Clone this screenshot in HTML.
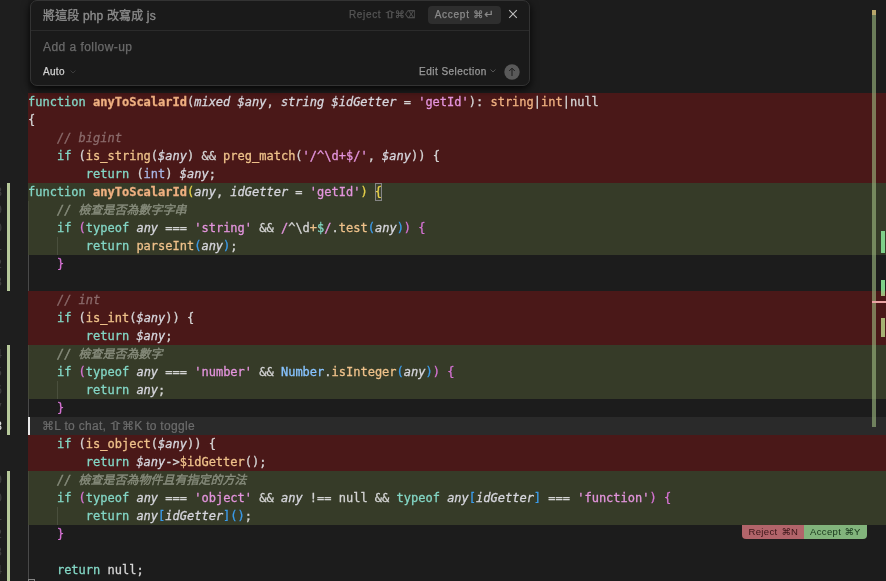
<!DOCTYPE html>
<html lang="zh-Hant">
<head>
<meta charset="utf-8">
<title>diff</title>
<style>
html,body{margin:0;padding:0;}
body{width:886px;height:581px;overflow:hidden;background:#1c1c1c;position:relative;font-family:"Liberation Sans","Noto Sans CJK TC",sans-serif;}
#gutter,#code,#panel,#btns{will-change:transform;}
#gutter{position:absolute;left:0;top:0;width:28px;height:581px;background:#1e1e1e;}
.gbar{position:absolute;left:7px;width:3px;background:#b7c99b;}
.ln{position:absolute;left:-12.3px;width:14.45px;height:18px;font:12px/18px "DejaVu Sans Mono","Liberation Mono",monospace;text-align:right;white-space:pre;}
#code{position:absolute;left:28px;top:93px;width:858px;}
.l{height:18px;line-height:18px;white-space:pre;font-family:"DejaVu Sans Mono","Liberation Mono","Noto Sans CJK TC",monospace;font-size:12px;letter-spacing:0;color:#d4d4d4;padding-left:0px;position:relative;font-variant-ligatures:none;-webkit-text-stroke:0.3px;}
.r{background:#4a1818;}
.g{background:#363b28;}
.cur{background:#2a2a2a;}
.k{color:#83d6c5;}
.f{color:#efb080;}
.fn{color:#eec18a;}
.v{color:#d6d6dd;font-style:italic;}
.s{color:#e394dc;}
.c{color:#6d6d6d;font-style:italic;}
.cr{color:#8a6a6a;font-style:italic;}
.cg{color:#878c7c;font-style:italic;-webkit-text-stroke:.4px;}
.t{color:#efb080;}
.y{color:#e6d04a;}
.bx{display:inline-block;height:18px;box-shadow:inset 0 0 0 1px #858585;background:rgba(255,255,255,.04);}
.ct{color:#a9b7e4;}
.p{color:#d673d4;}
.b{color:#3b9ceb;}
.cl{color:#87c3ff;}
.w{color:#d6d6dd;}
.ig{position:absolute;left:0px;top:0;width:1px;height:18px;background:rgba(255,255,255,.10);}
.hint{font-family:"Liberation Sans",sans-serif;font-size:12px;color:#6c6c6c;letter-spacing:.3px;-webkit-text-stroke:0.2px;}
#panel{position:absolute;left:30px;top:0;width:498px;height:84px;border:1px solid #333;border-radius:7px;background:#1a1a1a;box-shadow:0 3px 9px rgba(0,0,0,.85);}
#panel .div{position:absolute;left:0;right:0;top:29px;height:1px;background:#2b2b2b;}
#panel .tx{position:absolute;white-space:nowrap;-webkit-text-stroke:0.25px;}
.sym{font-family:"DejaVu Sans",sans-serif;}
.sh{font-family:"DejaVu Sans",sans-serif;display:inline-block;width:1em;text-align:center;transform:scaleX(1.7);letter-spacing:0;}
#vline{position:absolute;left:872px;top:10px;width:4px;height:417px;background:rgba(160,188,130,.6);}
#vtop{position:absolute;left:872px;top:10px;width:4px;height:5px;background:#b8a66a;}
.om{position:absolute;left:881px;width:4px;}
#pinkline{position:absolute;left:872px;top:301px;width:14px;height:2px;background:#e9a3a3;}
#btns{position:absolute;left:742px;top:525px;height:14px;width:125px;font-size:10px;line-height:14px;white-space:nowrap;}
#btns span.rj{position:absolute;left:0;top:0;width:62px;height:14px;background:#b2646a;color:#3a1518;border-radius:0 0 0 4px;text-align:center;}
#btns span.ac{position:absolute;left:62px;top:0;width:63px;height:14px;background:#82b47c;color:#17351a;border-radius:0 0 4px 0;text-align:center;}
#btns .bt{position:absolute;top:0;font-size:9.5px;line-height:14px;letter-spacing:.35px;}
.bk{display:inline-block;transform:scaleX(.72);transform-origin:0 50%;}
.l:not(.g)>.ig{background:rgba(255,255,255,.2);}
.g>.ig:first-child{background:rgba(255,255,255,.07);}
</style>
</head>
<body>
<div id="gutter">
<div class="ln" style="top:183px;color:#404040">38</div>
<div class="ln" style="top:201px;color:#404040">39</div>
<div class="ln" style="top:219px;color:#404040">40</div>
<div class="ln" style="top:237px;color:#404040">41</div>
<div class="ln" style="top:255px;color:#404040">42</div>
<div class="ln" style="top:273px;color:#404040">43</div>
<div class="ln" style="top:345px;color:#404040">44</div>
<div class="ln" style="top:363px;color:#404040">45</div>
<div class="ln" style="top:381px;color:#404040">46</div>
<div class="ln" style="top:399px;color:#404040">47</div>
<div class="ln" style="top:417px;color:#e0e0e0">48</div>
<div class="ln" style="top:471px;color:#404040">49</div>
<div class="ln" style="top:489px;color:#404040">50</div>
<div class="ln" style="top:507px;color:#404040">51</div>
<div class="ln" style="top:525px;color:#404040">52</div>
<div class="ln" style="top:543px;color:#404040">53</div>
<div class="ln" style="top:561px;color:#404040">54</div>
<div class="ln" style="top:579px;color:#404040">55</div>
<div class="gbar" style="top:183px;height:108px"></div>
<div class="gbar" style="top:345px;height:90px"></div>
<div class="gbar" style="top:471px;height:110px"></div>
</div>
<div id="code">
<div class="l r"><span class="k">function</span> <span class="f"><b>anyToScalarId</b></span>(<span class="v">mixed $any</span>, <span class="v">string $idGetter</span> = <span class="s">'getId'</span>): <span class="t">string</span>|<span class="t">int</span>|null</div>
<div class="l r">{</div>
<div class="l r">    <span class="cr">// bigint</span></div>
<div class="l r">    <span class="k">if</span> (<span class="fn">is_string</span>(<span class="v">$any</span>) &amp;&amp; <span class="fn">preg_match</span>(<span class="s">'/^\d+$/'</span>, <span class="v">$any</span>)) {</div>
<div class="l r">        <span class="k">return</span> (<span class="ct">int</span>) <span class="v">$any</span>;</div>
<div class="l g"><span class="k">function</span> <span class="f"><b>anyToScalarId</b></span><span class="y">(</span><span class="v">any</span>, <span class="v">idGetter</span> = <span class="s">'getId'</span><span class="y">)</span> <span class="y bx">{</span></div>
<div class="l g"><i class="ig"></i>    <span class="cg">// 檢查是否為數字字串</span></div>
<div class="l g"><i class="ig"></i>    <span class="k">if</span> <span class="p">(</span><span class="k">typeof</span> <span class="v">any</span> === <span class="s">'string'</span> &amp;&amp; <span class="s">/</span>^\d<span class="fn">+</span><span class="k">$</span><span class="s">/</span>.<span class="fn">test</span><span class="b">(</span><span class="v">any</span><span class="b">)</span><span class="p">)</span> <span class="p">{</span></div>
<div class="l g"><i class="ig"></i><i class="ig" style="left:29px"></i>        <span class="k">return</span> <span class="fn">parseInt</span><span class="b">(</span><span class="v">any</span><span class="b">)</span>;</div>
<div class="l"><i class="ig"></i>    <span class="p">}</span></div>
<div class="l"><i class="ig"></i></div>
<div class="l r">    <span class="cr">// int</span></div>
<div class="l r">    <span class="k">if</span> (<span class="fn">is_int</span>(<span class="v">$any</span>)) {</div>
<div class="l r">        <span class="k">return</span> <span class="v">$any</span>;</div>
<div class="l g"><i class="ig"></i>    <span class="cg">// 檢查是否為數字</span></div>
<div class="l g"><i class="ig"></i>    <span class="k">if</span> <span class="p">(</span><span class="k">typeof</span> <span class="v">any</span> === <span class="s">'number'</span> &amp;&amp; <span class="cl">Number</span>.<span class="fn">isInteger</span><span class="b">(</span><span class="v">any</span><span class="b">)</span><span class="p">)</span> <span class="p">{</span></div>
<div class="l g"><i class="ig"></i><i class="ig" style="left:29px"></i>        <span class="k">return</span> <span class="v">any</span>;</div>
<div class="l"><i class="ig"></i>    <span class="p">}</span></div>
<div class="l cur"><i style="position:absolute;left:0;top:0;width:2px;height:18px;background:#e8e8e8"></i><span class="hint" style="position:absolute;left:14px"><span class="sym">⌘</span>L to chat, <span class="sh">⇧</span><span class="sym">⌘</span>K to toggle</span></div>
<div class="l r">    <span class="k">if</span> (<span class="fn">is_object</span>(<span class="v">$any</span>)) {</div>
<div class="l r">        <span class="k">return</span> <span class="v">$any</span>-&gt;<span class="fn">$idGetter</span>();</div>
<div class="l g"><i class="ig"></i>    <span class="cg">// 檢查是否為物件且有指定的方法</span></div>
<div class="l g"><i class="ig"></i>    <span class="k">if</span> <span class="p">(</span><span class="k">typeof</span> <span class="v">any</span> === <span class="s">'object'</span> &amp;&amp; <span class="v">any</span> !== null &amp;&amp; <span class="k">typeof</span> <span class="v">any</span><span class="b">[</span><span class="v">idGetter</span><span class="b">]</span> === <span class="s">'function'</span><span class="p">)</span> <span class="p">{</span></div>
<div class="l g"><i class="ig"></i><i class="ig" style="left:29px"></i>        <span class="k">return</span> <span class="v">any</span><span class="b">[</span><span class="v">idGetter</span><span class="b">]()</span>;</div>
<div class="l"><i class="ig"></i>    <span class="p">}</span></div>
<div class="l"><i class="ig"></i></div>
<div class="l"><i class="ig"></i>    <span class="k">return</span> null;</div>
<div class="l"><span class="y bx">}</span></div>
</div>
<div id="vline"></div>
<div id="vtop"></div>
<div class="om" style="top:231px;height:22px;background:#7fd08a"></div>
<div class="om" style="top:280px;height:16px;background:linear-gradient(#7fd08a 0,#7fd08a 55%,#a9b579 100%)"></div>
<div id="pinkline"></div>
<div class="om" style="top:318px;height:19px;background:#a7b274"></div>
<div id="btns"><span class="rj"></span><span class="ac"></span><span class="bt" style="left:6.5px;color:#3a1518">Reject</span><span class="bt sym" style="left:39.5px;color:#3a1518;letter-spacing:0">⌘</span><span class="bt" style="left:49px;color:#3a1518">N</span><span class="bt" style="left:68px;color:#17351a">Accept</span><span class="bt sym" style="left:102.5px;color:#17351a;letter-spacing:0">⌘</span><span class="bt" style="left:112px;color:#17351a">Y</span></div>
<div id="panel">
<div class="div"></div>
<div class="tx" style="left:12px;top:5.7px;font-size:12px;line-height:18px;letter-spacing:.15px;color:#8c8c8c;-webkit-text-stroke:.35px">將這段 php 改寫成 js</div>
<div class="tx" style="left:12px;top:37px;font-size:12px;line-height:18px;letter-spacing:.45px;color:#6a6a6a">Add a follow-up</div>
<div class="tx" style="left:12px;top:62px;font-size:10px;line-height:18px;letter-spacing:.3px;color:#d0d0d0">Auto</div>
<svg class="tx" style="left:38px;top:67.5px" width="8" height="6" viewBox="0 0 8 6"><path d="M1.5 1.5 L4 4 L6.5 1.5" fill="none" stroke="#3c3c3c" stroke-width="1"/></svg>
<div class="tx" style="left:318px;top:5px;font-size:10px;line-height:18px;letter-spacing:.65px;color:#555">Reject <span class="sh">⇧</span><span class="sym">⌘</span><span class="sym bk">⌫</span></div>
<div class="tx" id="acc" style="left:397px;top:5px;width:73px;height:18px;border-radius:4px;background:#2e2e2e;font-size:10px;line-height:18px;letter-spacing:.75px;color:#8a8a8a;text-align:center">Accept <span class="sym">⌘<span style="font-size:11.5px;line-height:10px">↵</span></span></div>
<svg class="tx" style="left:477px;top:8.3px" width="10" height="10" viewBox="0 0 10 10"><path d="M1.2 1.2 L8.8 8.8 M8.8 1.2 L1.2 8.8" fill="none" stroke="#bdbdbd" stroke-width="1.1"/></svg>
<div class="tx" style="left:388px;top:62px;font-size:10px;line-height:18px;letter-spacing:.48px;color:#999">Edit Selection</div>
<svg class="tx" style="left:458px;top:67.3px" width="8" height="6" viewBox="0 0 8 6"><path d="M1.5 1.5 L4 4 L6.5 1.5" fill="none" stroke="#555" stroke-width="1"/></svg>
<svg class="tx" style="left:473px;top:63px" width="16" height="16" viewBox="0 0 16 16"><circle cx="8" cy="8" r="7.7" fill="#595959"/><path d="M8 12 V4.4 M5.2 7 L8 4.2 L10.8 7" fill="none" stroke="#1c1c1c" stroke-width="1"/></svg>
</div>
</body>
</html>
